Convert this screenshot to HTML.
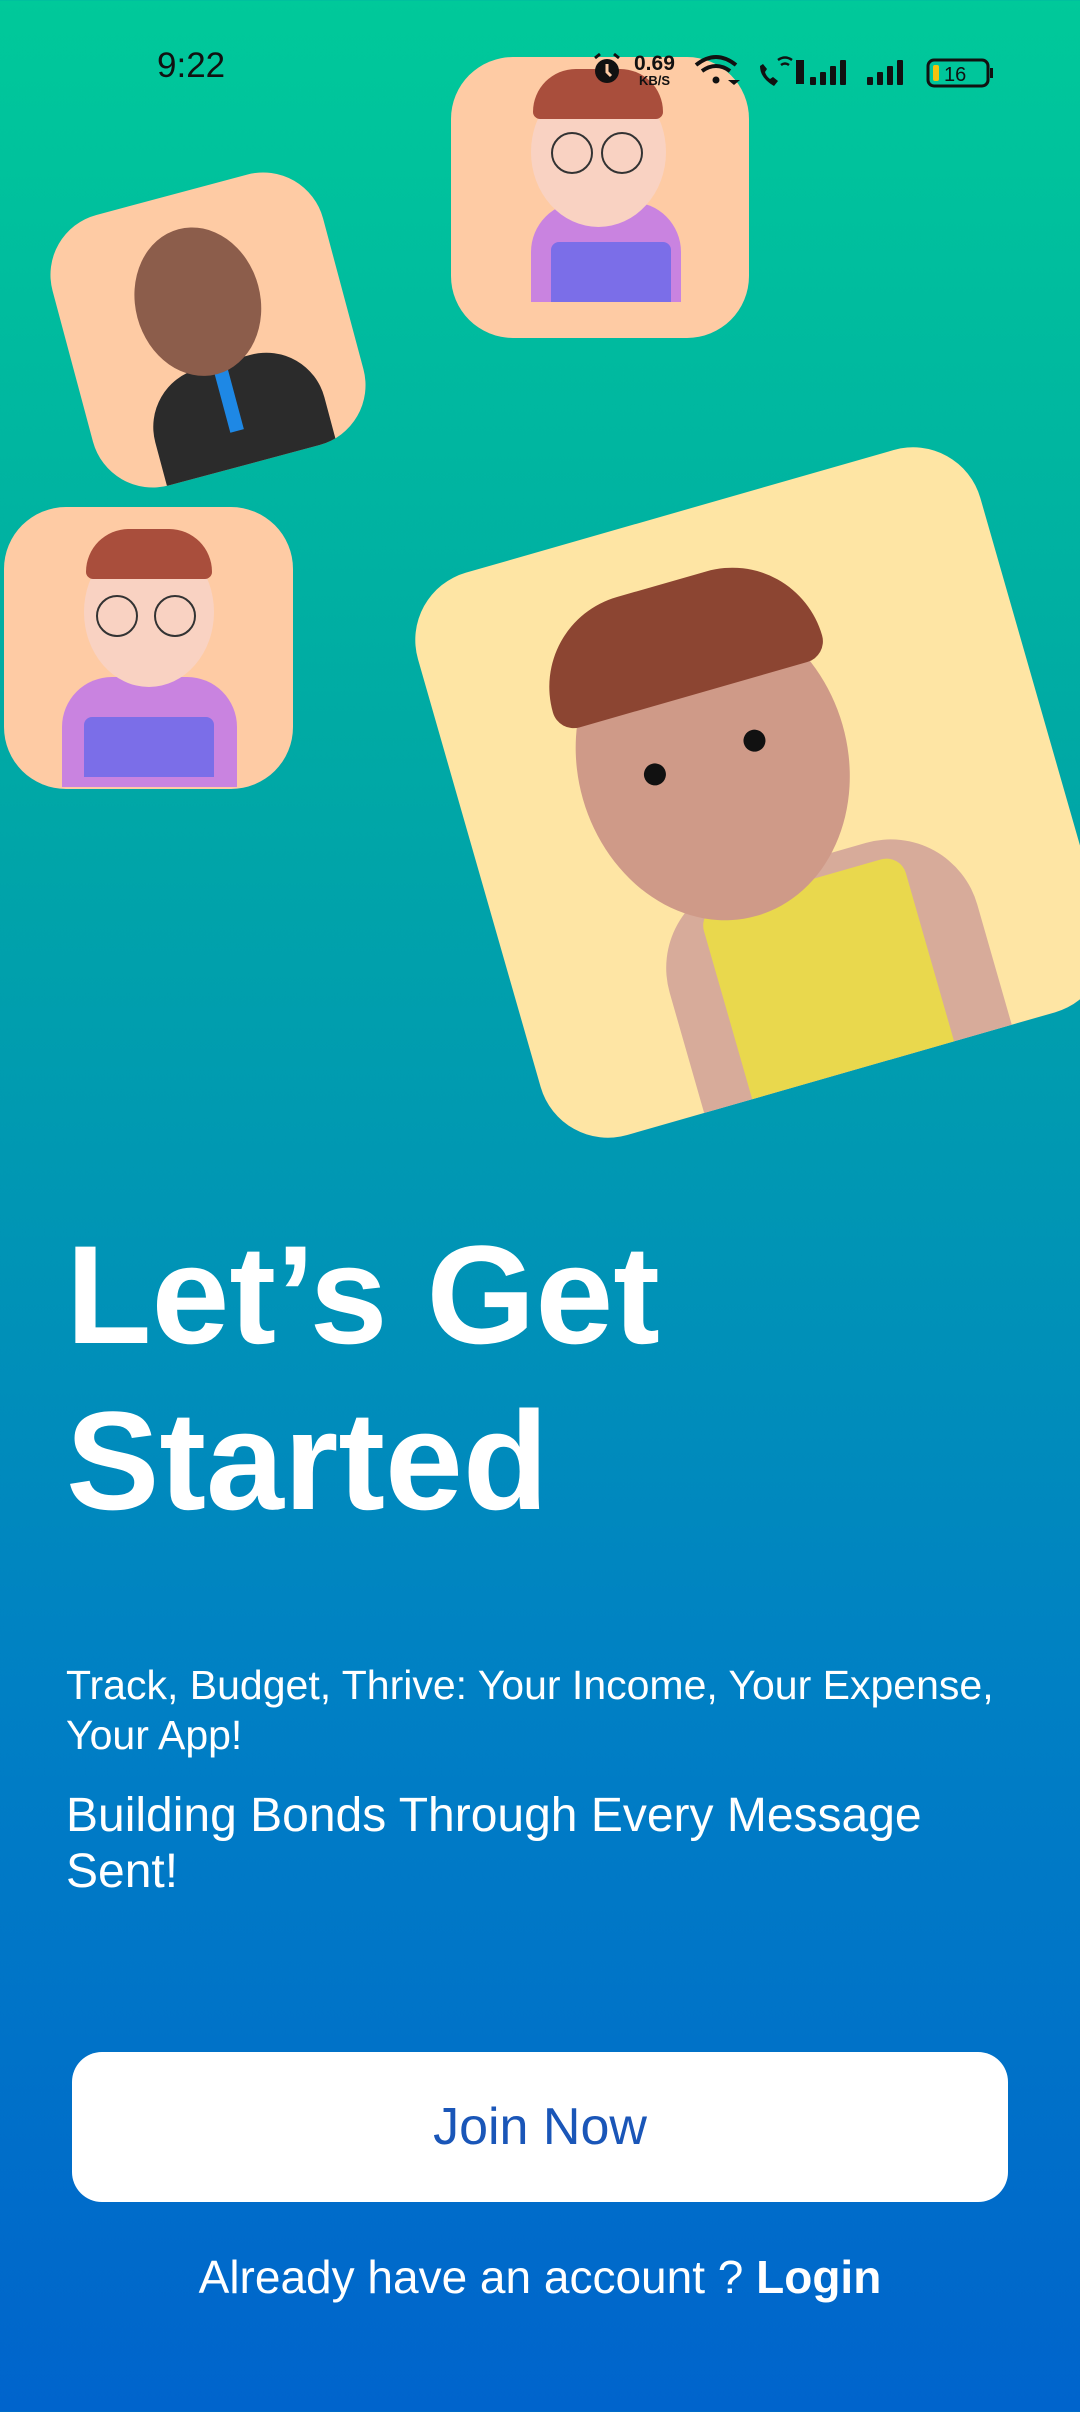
<!DOCTYPE html>
<html><head><meta charset="utf-8"><style>
*{margin:0;padding:0;box-sizing:border-box}
body{width:1080px;height:2412px;overflow:hidden;position:relative;font-family:"Liberation Sans",sans-serif;background:linear-gradient(180deg,#00c99a 0%,#00aaa4 30%,#0096b4 50%,#0080c4 70%,#0064cc 100%)}
.card{position:absolute;border-radius:62px;overflow:hidden}
.peach{background:#fecba4}
.yel{background:#fee5a4}
.a{position:absolute}
.t{position:absolute;color:#fff;white-space:nowrap}
</style></head><body>

<!-- top girl card -->
<div class="card peach" style="left:451px;top:57px;width:298px;height:281px">
 <div class="a" style="left:80px;top:145px;width:150px;height:100px;border-radius:50px 50px 0 0;background:#c983e0"></div>
 <div class="a" style="left:100px;top:185px;width:120px;height:60px;background:#7b6ee8;border-radius:8px 8px 0 0"></div>
 <div class="a" style="left:80px;top:20px;width:135px;height:150px;border-radius:50%;background:#f9d2c2"></div>
 <div class="a" style="left:82px;top:12px;width:130px;height:50px;border-radius:60px 60px 10px 10px;background:#a94e3c"></div>
 <div class="a" style="left:100px;top:75px;width:42px;height:42px;border-radius:50%;border:2px solid #333"></div>
 <div class="a" style="left:150px;top:75px;width:42px;height:42px;border-radius:50%;border:2px solid #333"></div>
</div>
<!-- man card -->
<div class="card peach" style="left:68px;top:190px;width:280px;height:280px;transform:rotate(-15deg)">
 <div class="a" style="left:60px;top:175px;width:175px;height:110px;border-radius:60px 60px 0 0;background:#2b2b2b"></div>
 <div class="a" style="left:135px;top:175px;width:14px;height:70px;background:#1e88e5"></div>
 <div class="a" style="left:75px;top:35px;width:125px;height:150px;border-radius:50%;background:#8c5d4b"></div>
</div>
<!-- left girl card -->
<div class="card peach" style="left:4px;top:507px;width:289px;height:282px">
 <div class="a" style="left:58px;top:170px;width:175px;height:110px;border-radius:50px 50px 0 0;background:#c983e0"></div>
 <div class="a" style="left:80px;top:210px;width:130px;height:60px;background:#7b6ee8;border-radius:8px 8px 0 0"></div>
 <div class="a" style="left:80px;top:30px;width:130px;height:150px;border-radius:50%;background:#f9d2c2"></div>
 <div class="a" style="left:82px;top:22px;width:126px;height:50px;border-radius:60px 60px 10px 10px;background:#a94e3c"></div>
 <div class="a" style="left:92px;top:88px;width:42px;height:42px;border-radius:50%;border:2px solid #333"></div>
 <div class="a" style="left:150px;top:88px;width:42px;height:42px;border-radius:50%;border:2px solid #333"></div>
</div>
<!-- big card -->
<div class="card yel" style="left:468px;top:500px;width:585px;height:585px;transform:rotate(-16deg);border-radius:70px">
 <div class="a" style="left:150px;top:370px;width:320px;height:230px;border-radius:90px 90px 0 0;background:#d7ab9a"></div>
 <div class="a" style="left:200px;top:390px;width:210px;height:210px;background:#e9d84d;border-radius:20px 20px 0 0"></div>
 <div class="a" style="left:120px;top:90px;width:270px;height:320px;border-radius:50%;background:#cf9a88"></div>
 <div class="a" style="left:115px;top:65px;width:280px;height:115px;border-radius:130px 130px 30px 30px;background:#8c4532"></div>
 <div class="a" style="left:185px;top:235px;width:22px;height:22px;border-radius:50%;background:#111"></div>
 <div class="a" style="left:290px;top:230px;width:22px;height:22px;border-radius:50%;background:#111"></div>
</div>

<!-- status bar -->
<div class="t" style="left:157px;top:46px;font-size:35px;color:#111">9:22</div>
<svg class="a" style="left:588px;top:48px" width="410" height="42" viewBox="0 0 410 42">
<circle cx="19" cy="23" r="12" fill="#111"/><path d="M19 16v8l4 4" stroke="#fecba4" stroke-width="3" fill="none"/>
<path d="M7 10l5-4M31 10l-5-4" stroke="#111" stroke-width="3"/>
<text x="46" y="22" font-size="21" font-weight="bold" fill="#111" font-family="Liberation Sans">0.69</text>
<text x="51" y="37" font-size="13" font-weight="bold" fill="#111" font-family="Liberation Sans">KB/S</text>
<path d="M108 17q20-16 40 0" stroke="#111" stroke-width="4" fill="none"/><path d="M114 23q14-10 28 0" stroke="#111" stroke-width="4" fill="none"/><circle cx="128" cy="32" r="3.5" fill="#111"/><path d="M140 32l6 5 6-5z" fill="#111"/>
<path d="M172 18q0 12 14 20l4-5-5-4-3 2q-4-3-5-7l2-3-4-5z" fill="#111"/><path d="M190 12q7-5 14 0M193 17q4-3 8 0" stroke="#111" stroke-width="2.5" fill="none"/>
<rect x="208" y="12" width="8" height="24" fill="#111"/>
<rect x="222" y="29" width="6" height="8" rx="1" fill="#111"/><rect x="232" y="24" width="6" height="13" rx="1" fill="#111"/><rect x="242" y="18" width="6" height="19" rx="1" fill="#111"/><rect x="252" y="12" width="6" height="25" rx="1" fill="#111"/>
<rect x="279" y="29" width="6" height="8" rx="1" fill="#111"/><rect x="289" y="24" width="6" height="13" rx="1" fill="#111"/><rect x="299" y="18" width="6" height="19" rx="1" fill="#111"/><rect x="309" y="12" width="6" height="25" rx="1" fill="#111"/>
<rect x="340" y="12" width="60" height="26" rx="6" stroke="#111" stroke-width="3" fill="none"/><rect x="345" y="17" width="6" height="16" rx="2" fill="#f5c20c"/><rect x="402" y="20" width="3" height="10" fill="#111"/>
<text x="356" y="33" font-size="20" fill="#111" font-family="Liberation Sans">16</text>
</svg>

<div class="t" style="left:66px;top:1212px;font-size:140px;line-height:166px;font-weight:bold">Let’s Get<br>Started</div>
<div class="t" style="left:66px;top:1660px;font-size:41px;line-height:50px;white-space:normal;width:960px">Track, Budget, Thrive: Your Income, Your Expense, Your App!</div>
<div class="t" style="left:66px;top:1788px;font-size:48px;line-height:56px;white-space:normal;width:960px">Building Bonds Through Every Message Sent!</div>

<div class="a" style="left:72px;top:2052px;width:936px;height:150px;border-radius:30px;background:#fff;display:flex;align-items:center;justify-content:center;font-size:52px;color:#1a56b8">Join Now</div>
<div class="t" style="left:0;width:1080px;text-align:center;top:2250px;font-size:46px">Already have an account ? <b>Login</b></div>
</body></html>
